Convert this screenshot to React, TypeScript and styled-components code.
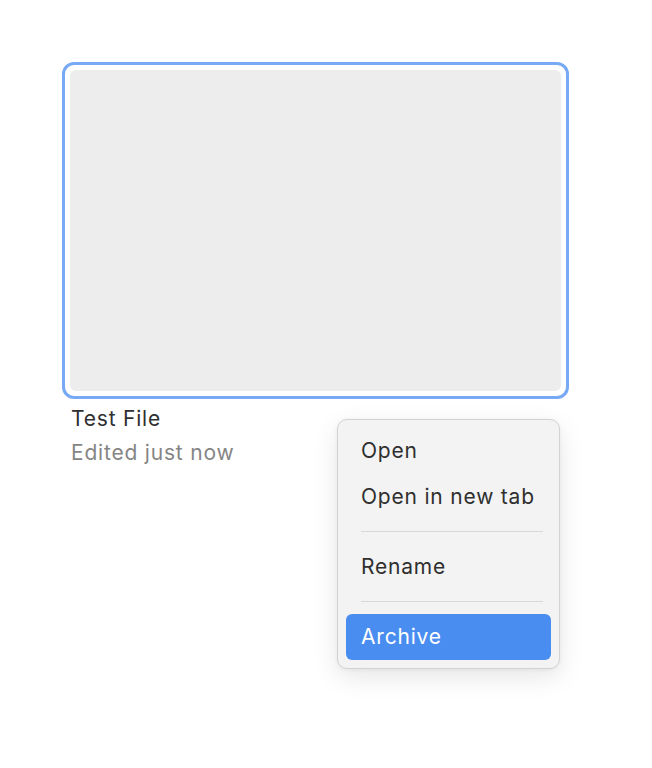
import React, { FC } from "react"
import styled, { createGlobalStyle } from "styled-components"

const GlobalStyle = createGlobalStyle`
  * {
    box-sizing: border-box;
  }
  body {
    margin: 0;
    background: white;
    font-family: "Inter", "Noto Sans", sans-serif;
    -webkit-font-smoothing: antialiased;
  }
`

interface MenuItem {
  label: string
  active?: boolean
  separatorBefore?: boolean
}

const items: MenuItem[] = [
  { label: "Open" },
  { label: "Open in new tab" },
  { label: "Rename", separatorBefore: true },
  { label: "Archive", separatorBefore: true, active: true },
]

const App: FC = () => {
  return (
    <Page>
      <GlobalStyle />
      <FileCard>
        <Thumb>
          <Preview />
        </Thumb>
        <Title>Test File</Title>
        <Meta>Edited just now</Meta>
        <Menu>
          {items.map(item => (
            <React.Fragment key={item.label}>
              {item.separatorBefore && <Separator />}
              <Item active={item.active}>{item.label}</Item>
            </React.Fragment>
          ))}
        </Menu>
      </FileCard>
    </Page>
  )
}

export default App

//---------------------------STYLES-------------------------------------------//

const Page = styled.div`
  width: 652px;
  min-height: 768px;
  padding: 62px 0 0 62px;
`

const FileCard = styled.div`
  position: relative;
  width: 507px;
`

const Thumb = styled.div`
  width: 507px;
  height: 337px;
  border: 3px solid #78a9f4;
  border-radius: 12px;
  padding: 5px;
  background: white;
`

const Preview = styled.div`
  width: 100%;
  height: 100%;
  background: #ededed;
  border-radius: 6px;
`

const Title = styled.div`
  margin: 6px 0 0 9px;
  font-size: 21px;
  letter-spacing: 0.8px;
  line-height: 28px;
  color: #2f2f2f;
`

const Meta = styled.div`
  margin: 6px 0 0 9px;
  font-size: 21px;
  letter-spacing: 0.8px;
  line-height: 28px;
  color: #858585;
`

const Menu = styled.div`
  position: absolute;
  left: 275px;
  top: 357px;
  width: 223px;
  padding: 8px;
  background: #f3f3f3;
  border: 1px solid #d2d2d2;
  border-radius: 10px;
  box-shadow: 0 8px 26px rgba(0, 0, 0, 0.1), 0 1px 4px rgba(0, 0, 0, 0.05);
  display: flex;
  flex-direction: column;
`

interface IItem {
  active?: boolean
}

const Item = styled.div<IItem>`
  height: 46px;
  display: flex;
  align-items: center;
  padding: 0 15px 2px;
  border-radius: 6px;
  font-size: 21px;
  letter-spacing: 0.8px;
  color: ${props => (props.active ? "white" : "#2f2f2f")};
  background: ${props => (props.active ? "#4a8df0" : "transparent")};
  cursor: default;
`

const Separator = styled.div`
  height: 1px;
  background: #d8d8d8;
  margin: 11px 8px 12px 15px;
`
